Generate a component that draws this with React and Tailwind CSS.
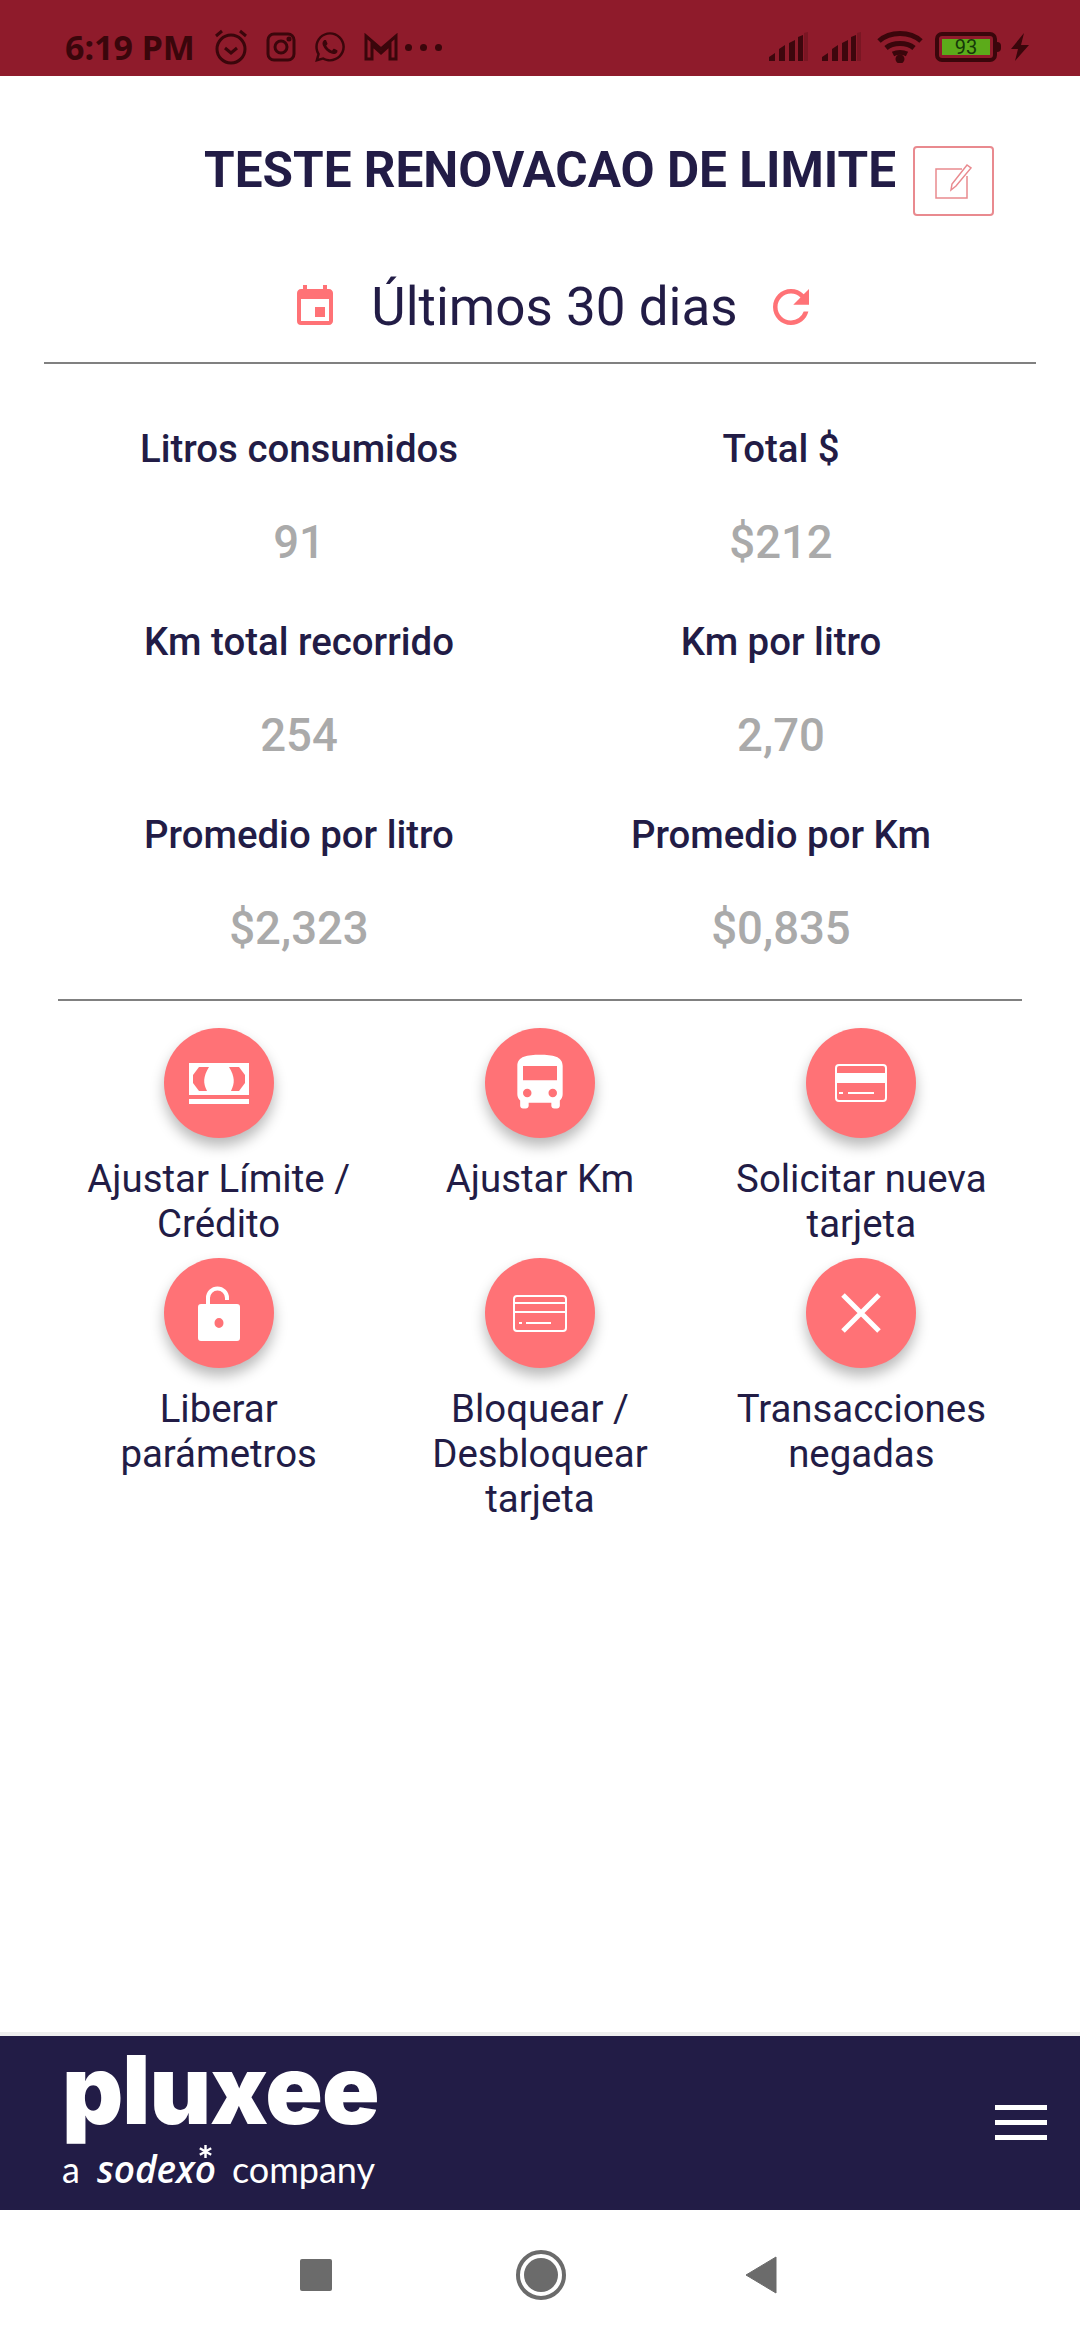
import React from 'react';
import { MdEvent, MdRefresh, MdDirectionsBus } from 'react-icons/md';
import { FaWhatsapp } from 'react-icons/fa';

const stats = [
  ['Litros consumidos', '91', 'Total $', '$212'],
  ['Km total recorrido', '254', 'Km por litro', '2,70'],
  ['Promedio por litro', '$2,323', 'Promedio por Km', '$0,835'],
];

function CashIcon() {
  return (
    <svg width="60" height="41" viewBox="0 0 60 41">
      <path fill="#fff" fillRule="evenodd" d="M0 0h60v32H0z M10 4L4 12v8l6 8h8C14 20 14 14 20 4z M50 4l6 8v8l-6 8h-8C46 20 46 14 40 4z" />
      <rect x="0" y="36" width="60" height="5" fill="#fff" />
    </svg>
  );
}

function CardIcon() {
  return (
    <svg width="52" height="38" viewBox="0 0 52 38" fill="none" stroke="#fff" strokeWidth="2">
      <rect x="1" y="1" width="50" height="36" rx="3" />
      <rect x="1" y="9" width="50" height="10" fill="#fff" stroke="none" />
      <path d="M4 29h4M13 29h26" />
    </svg>
  );
}

function CardOutlineIcon() {
  return (
    <svg width="54" height="37" viewBox="0 0 54 37" fill="none" stroke="#fff" strokeWidth="2">
      <rect x="1" y="1" width="52" height="35" rx="3" />
      <path d="M1 8h52M1 17h52" />
      <path d="M6 28h3M13 28h25" />
    </svg>
  );
}

function LockIcon() {
  return (
    <svg width="42" height="55" viewBox="0 0 42 55">
      <path d="M10 20V12a9.500 9.500 0 0 1 19 0v2" fill="none" stroke="#fff" strokeWidth="4" />
      <path fill="#fff" fillRule="evenodd" d="M3 18h36a3 3 0 0 1 3 3v31a3 3 0 0 1-3 3H3a3 3 0 0 1-3-3V21a3 3 0 0 1 3-3z M21 32a4.500 5 0 1 0 0 10a4.500 5 0 1 0 0-10z" />
    </svg>
  );
}

function CloseIcon() {
  return (
    <svg width="40" height="40" viewBox="0 0 40 40" stroke="#fff" strokeWidth="5">
      <path d="M2 2l36 36M38 2L2 38" />
    </svg>
  );
}

const actions = [
  { lines: ['Ajustar Límite /', 'Crédito'], icon: <CashIcon /> },
  { lines: ['Ajustar Km'], icon: <MdDirectionsBus size={68} color="#fff" /> },
  { lines: ['Solicitar nueva', 'tarjeta'], icon: <CardIcon /> },
  { lines: ['Liberar', 'parámetros'], icon: <LockIcon /> },
  { lines: ['Bloquear /', 'Desbloquear', 'tarjeta'], icon: <CardOutlineIcon /> },
  { lines: ['Transacciones', 'negadas'], icon: <CloseIcon /> },
];

function Signal() {
  return (
    <svg width="40" height="30" viewBox="0 0 40 30" fill="#3d070d">
      <path d="M1 29v-4l6-4v8zM11 29V17l6-4v16zM21 29V11l6-3v21zM30 29V5l5-2v26z" />
      <path d="M36 29V1l4-1v29z" opacity="0.25" />
    </svg>
  );
}

function StatusBar() {
  const dark = '#3a060b';
  return (
    <div className="flex h-[76px] items-center bg-[#8f1b2b] pr-[50px] pl-[65px] pt-[18px]">
      <span className="[font-family:'Noto_Sans',sans-serif] text-[34px] leading-none font-bold text-[#3a060b]">6:19 PM</span>
      <div className="ml-[18px] flex items-center gap-[17px]">
        <svg width="36" height="36" viewBox="0 0 36 36" fill="none" stroke={dark} strokeWidth="3">
          <circle cx="18" cy="20" r="14" />
          <path d="M12 19l6 5 6-5M3 7l6-5M33 7l-6-5" />
        </svg>
        <svg width="30" height="30" viewBox="0 0 30 30" fill="none" stroke={dark} strokeWidth="3">
          <rect x="2" y="2" width="26" height="26" rx="6" />
          <circle cx="15" cy="15" r="6" />
          <circle cx="23" cy="7" r="1" fill={dark} />
        </svg>
        <FaWhatsapp size={34} color={dark} />
        <svg width="34" height="28" viewBox="0 0 34 28" fill="none" stroke={dark} strokeWidth="3">
          <path d="M2 26V3l15 13L32 3v23h-6V12l-9 8-9-8v14z" />
        </svg>
      </div>
      <div className="ml-[7px] flex items-center gap-[8px]">
        <span className="h-[7px] w-[7px] rounded-full bg-[#3a060b]" />
        <span className="h-[7px] w-[7px] rounded-full bg-[#3a060b]" />
        <span className="h-[7px] w-[7px] rounded-full bg-[#3a060b]" />
      </div>
      <div className="ml-auto flex items-center">
        <Signal />
        <div className="ml-[13px]"><Signal /></div>
        <svg className="ml-[16px]" width="46" height="32" viewBox="0 0 46 32" fill="none" stroke={dark} strokeWidth="5">
          <path d="M2 10c11-10 31-10 42 0M9 17c7-6 21-6 28 0M16 23c4-2 10-2 14 0" />
          <circle cx="23" cy="28" r="2" fill={dark} />
        </svg>
        <div className="ml-[12px] flex items-center">
          <div className="flex h-[30px] w-[62px] rounded-[7px] border-[4px] border-[#3a060b] p-[3px]">
            <div className="flex flex-1 items-center justify-center bg-[#5cab1a] [font-family:Roboto,sans-serif] text-[20px] leading-none text-[#16380a]">93</div>
          </div>
          <div className="h-[10px] w-[4px] rounded-r-sm bg-[#3a060b]" />
        </div>
        <svg className="ml-[9px]" width="20" height="28" viewBox="0 0 20 28" fill={dark}>
          <path d="M14 0L1 16h7l-3 12 14-16h-8z" />
        </svg>
      </div>
    </div>
  );
}

export default function App() {
  return (
    <div className="flex h-[2340px] w-[1080px] flex-col overflow-hidden bg-white [font-family:Roboto,sans-serif] text-[#221c46]">
      <StatusBar />

      <main className="flex-1">
        {/* Header */}
        <div className="flex items-start pt-[70px] pl-[204px]">
          <h1 className="text-[49.500px] leading-[48px] font-bold whitespace-nowrap">TESTE RENOVACAO DE LIMITE</h1>
          <button className="ml-[17px] flex h-[70px] w-[81px] items-center justify-center rounded-[4px] border-2 border-[#e98a8f]">
            <svg width="40" height="36" viewBox="0 0 40 36" fill="none" stroke="#e98a8f" strokeWidth="1.500">
              <path d="M28 6H2v29h31V13" />
              <path d="M17 27l1-6L33 2l4 3-15 18z" />
            </svg>
          </button>
        </div>

        {/* Periodo */}
        <div className="mx-[44px] mt-[46px] flex h-[102px] items-center justify-center border-b-2 border-[#808080] pb-[10px] pl-[29px]">
          <MdEvent size={48} color="#ff7276" />
          <span className="mr-[26px] ml-[32px] text-[53px] leading-none">Últimos 30 dias</span>
          <MdRefresh size={54} color="#ff7276" />
        </div>

        {/* Stats */}
        <div className="mx-[58px] mt-[60px] grid grid-cols-[482px_1fr] gap-y-[49px] border-b-2 border-[#808080] pb-[45px] text-center">
          {stats.flatMap(([l1, v1, l2, v2]) => [[l1, v1], [l2, v2]]).map(([label, value]) => (
            <div key={label}>
              <p className="text-[38.400px] leading-[50px] font-medium">{label}</p>
              <p className="mt-[44px] text-[45.500px] leading-[50px] font-medium text-[#aaaaaa]">{value}</p>
            </div>
          ))}
        </div>

        {/* Acciones */}
        <div className="mx-[58px] mt-[27px] grid grid-cols-3">
          {actions.map(a => (
            <div key={a.lines[0]} className="flex h-[230px] flex-col items-center text-center">
              <div className="flex h-[110px] w-[110px] shrink-0 items-center justify-center rounded-full bg-[#ff7276] shadow-[0_8px_14px_rgba(0,0,0,0.28)]">
                {a.icon}
              </div>
              <p className="mt-[18px] text-[38.400px] leading-[45px]">
                {a.lines.map(line => <span key={line} className="block whitespace-nowrap">{line}</span>)}
              </p>
            </div>
          ))}
        </div>
      </main>

      {/* Footer */}
      <footer className="flex h-[178px] items-start justify-between border-t-[4px] border-[#eeeeee] bg-[#221c46] pt-[10px] pr-[33px] pl-[62px]">
        <div className="text-white">
          <div className="[font-family:Inter,sans-serif] text-[95px] leading-[88px] font-black tracking-[-1px]">pluxee</div>
          <div className="mt-[15px] flex items-baseline [font-family:Lato,sans-serif] text-[36px] leading-[40px]">
            <span>a</span>
            <span className="relative mr-[12px] ml-[17px] w-[123px] [font-family:'Open_Sans',sans-serif] text-[37px] font-semibold italic">
              sodexo
              <svg className="absolute top-[-4px] left-[102px]" width="13" height="13" viewBox="0 0 16 16" stroke="#fff" strokeWidth="3">
                <path d="M8 0v16M1 4l14 8M15 4L1 12" />
              </svg>
            </span>
            <span>company</span>
          </div>
        </div>
        <div className="flex w-[52px] flex-col gap-[10px] self-center pb-[12px]">
          <span className="h-[5px] bg-white" />
          <span className="h-[5px] bg-white" />
          <span className="h-[5px] bg-white" />
        </div>
      </footer>

      {/* Android nav */}
      <nav className="flex h-[130px] items-center bg-white pl-[300px]">
        <div className="h-[32px] w-[32px] rounded-[2px] bg-[#6b6b6b]" />
        <div className="mr-[179px] ml-[184px] flex h-[50px] w-[50px] items-center justify-center rounded-full border-[4px] border-[#6b6b6b]">
          <div className="h-[34px] w-[34px] rounded-full bg-[#6b6b6b]" />
        </div>
        <svg width="32" height="38" viewBox="0 0 32 38">
          <path d="M31 1v36L1 19z" fill="#6b6b6b" stroke="#6b6b6b" strokeLinejoin="round" />
        </svg>
      </nav>
    </div>
  );
}
